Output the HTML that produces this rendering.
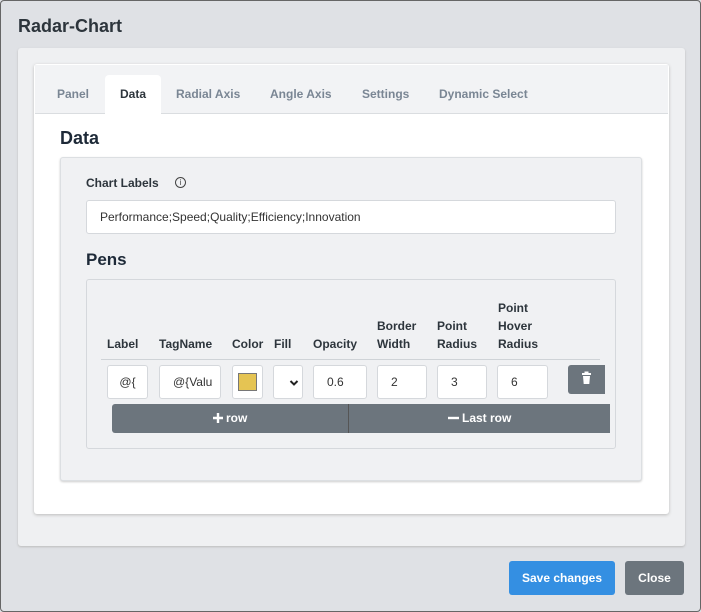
<!DOCTYPE html>
<html><head><style>
*{box-sizing:border-box;margin:0;padding:0}
body{width:701px;height:612px;background:#dfe1e5;font-family:"Liberation Sans",Arial,sans-serif;position:relative;overflow:hidden}
.a{position:absolute}
.t{font-size:12px;font-weight:bold;color:#7a8694}
.h{font-size:12px;font-weight:bold;color:#2d353c;line-height:18px}
.in{position:absolute;background:#fff;border:1px solid #d5d8dc;border-radius:3px;font-size:12px;color:#333;line-height:32px}
</style></head><body>
<div class="a" style="left:0;top:0;width:701px;height:612px;border:1px solid #666;border-radius:4px"></div>
<div class="a" style="left:18px;top:16px;font-size:18px;font-weight:bold;color:#2d353c">Radar-Chart</div>
<div class="a" style="left:18px;top:48px;width:667px;height:498px;background:#eff0f2;border-radius:3px;box-shadow:0 1px 2px #bbb"></div>
<div class="a" style="left:34px;top:64px;width:635px;height:450px;background:#fff;border-radius:3px;box-shadow:0 1px 3px #bbb"></div>
<div class="a" style="left:35px;top:65px;width:633px;height:49px;background:#f2f3f5;border-bottom:1px solid #dadde0"></div>
<div class="a" style="left:105px;top:75px;width:56px;height:39px;background:#fff;border-radius:4px 4px 0 0"></div>
<div class="a t" style="left:57px;top:87px">Panel</div>
<div class="a t" style="left:120px;top:87px;color:#2d353c">Data</div>
<div class="a t" style="left:176px;top:87px">Radial Axis</div>
<div class="a t" style="left:270px;top:87px">Angle Axis</div>
<div class="a t" style="left:362px;top:87px">Settings</div>
<div class="a t" style="left:439px;top:87px">Dynamic Select</div>
<div class="a" style="left:60px;top:128px;font-size:18px;font-weight:bold;color:#1e2a38">Data</div>
<div class="a" style="left:60px;top:157px;width:582px;height:324px;background:#f0f1f3;border:1px solid #dcdfe2;border-radius:3px;box-shadow:0 1px 2px #ccc"></div>
<div class="a" style="left:86px;top:176px;font-size:12px;font-weight:bold;color:#2d353c">Chart Labels</div>
<div class="a" style="left:175px;top:177px;width:11px;height:11px;border:1px solid #444;border-radius:50%;font-size:8px;text-align:center;line-height:9px;color:#444">i</div>
<div class="in" style="left:86px;top:200px;width:530px;height:34px;padding-left:13px">Performance;Speed;Quality;Efficiency;Innovation</div>
<div class="a" style="left:86px;top:250px;font-size:17px;font-weight:bold;color:#1e2a38">Pens</div>
<div class="a" style="left:86px;top:279px;width:530px;height:170px;background:#f0f1f3;border:1px solid #d5d8dc;border-radius:3px"></div>
<div class="a h" style="left:107px;top:335px">Label</div>
<div class="a h" style="left:159px;top:335px">TagName</div>
<div class="a h" style="left:232px;top:335px">Color</div>
<div class="a h" style="left:274px;top:335px">Fill</div>
<div class="a h" style="left:313px;top:335px">Opacity</div>
<div class="a h" style="left:377px;top:317px">Border<br>Width</div>
<div class="a h" style="left:437px;top:317px">Point<br>Radius</div>
<div class="a h" style="left:498px;top:299px">Point<br>Hover<br>Radius</div>
<div class="a" style="left:101px;top:359px;width:499px;height:1px;background:#cfd3d7"></div>
<div class="in" style="left:107px;top:365px;width:41px;height:34px;text-align:center">@{</div>
<div class="in" style="left:159px;top:365px;width:62px;height:34px;padding-left:13px;overflow:hidden;white-space:nowrap">@{Valu</div>
<div class="in" style="left:232px;top:365px;width:31px;height:34px"><div class="a" style="left:5px;top:7px;width:19px;height:18px;background:#e5c453;border:1px solid #777"></div></div>
<div class="in" style="left:273px;top:365px;width:30px;height:34px"><svg class="a" style="left:15px;top:13px" width="10" height="8"><path d="M1.5 2l3.5 3.5 3.5-3.5" stroke="#222" stroke-width="2" fill="none"/></svg></div>
<div class="in" style="left:313px;top:365px;width:54px;height:34px;padding-left:13px">0.6</div>
<div class="in" style="left:377px;top:365px;width:50px;height:34px;padding-left:13px">2</div>
<div class="in" style="left:437px;top:365px;width:50px;height:34px;padding-left:13px">3</div>
<div class="in" style="left:497px;top:365px;width:51px;height:34px;padding-left:13px">6</div>
<div class="a" style="left:568px;top:365px;width:37px;height:29px;background:#6c757d;border-radius:3px 0 0 3px"><svg width="37" height="29"><rect x="14" y="8" width="9" height="2" fill="#fff"/><rect x="16.5" y="6.5" width="4" height="2" fill="#fff"/><path d="M15 11h7l-.7 8h-5.6z" fill="#fff"/></svg></div>
<div class="a" style="left:112px;top:404px;width:236px;height:29px;background:#6c757d;border-radius:3px 0 0 3px;color:#fff;font-size:12px;font-weight:bold;text-align:center;line-height:29px"><svg width="10" height="10" style="vertical-align:-1px"><path d="M5 0v10M0 5h10" stroke="#fff" stroke-width="2.4"/></svg> row</div>
<div class="a" style="left:348px;top:404px;width:262px;height:29px;background:#6c757d;border-left:1px solid #555;color:#fff;font-size:12px;font-weight:bold;text-align:center;line-height:29px"><svg width="11" height="10" style="vertical-align:-1px"><path d="M0 5h11" stroke="#fff" stroke-width="2.4"/></svg> Last row</div>
<div class="a" style="left:509px;top:561px;width:106px;height:34px;background:#348fe2;border-radius:3px;color:#fff;font-size:12px;font-weight:bold;text-align:center;line-height:34px">Save changes</div>
<div class="a" style="left:625px;top:561px;width:59px;height:34px;background:#6c757d;border-radius:3px;color:#fff;font-size:12px;font-weight:bold;text-align:center;line-height:34px">Close</div>
</body></html>
